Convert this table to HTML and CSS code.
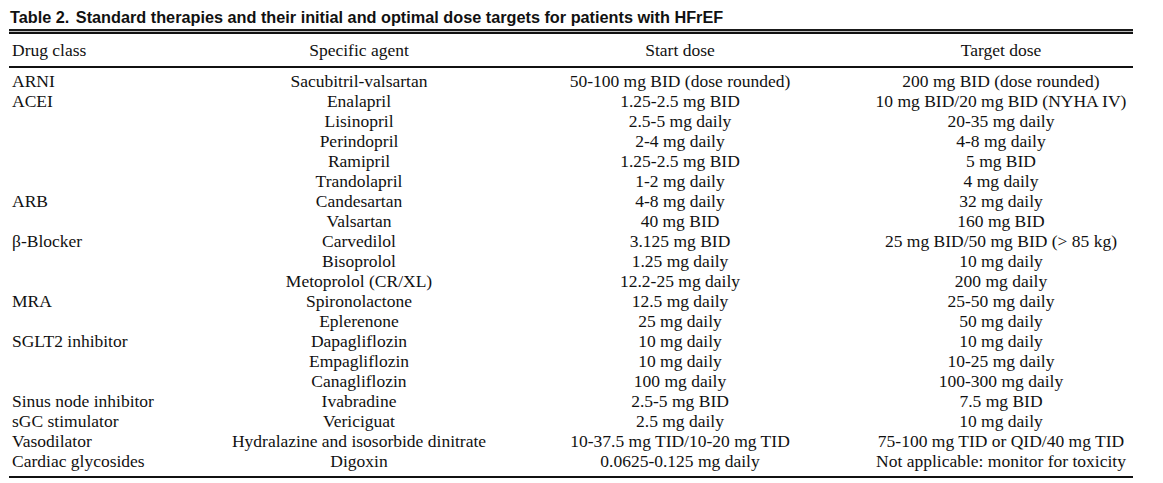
FILE: index.html
```html
<!DOCTYPE html>
<html>
<head>
<meta charset="utf-8">
<link rel="stylesheet" href="styles.css">
</head>
<body>
<div class="wrap">
  <div class="caption"><span class="label">Table 2.</span> Standard therapies and their initial and optimal dose targets for patients with HFrEF</div>
  <div class="double-rule"></div>
  <table class="dose-table">
    <colgroup>
      <col class="c1"><col class="c2"><col class="c3"><col class="c4">
    </colgroup>
    <thead>
      <tr><th class="left">Drug class</th><th>Specific agent</th><th>Start dose</th><th>Target dose</th></tr>
    </thead>
    <tbody>
      <tr class="first"><td class="left">ARNI</td><td>Sacubitril-valsartan</td><td>50-100 mg BID (dose rounded)</td><td>200 mg BID (dose rounded)</td></tr>
      <tr><td class="left">ACEI</td><td>Enalapril</td><td>1.25-2.5 mg BID</td><td>10 mg BID/20 mg BID (NYHA IV)</td></tr>
      <tr><td class="left"></td><td>Lisinopril</td><td>2.5-5 mg daily</td><td>20-35 mg daily</td></tr>
      <tr><td class="left"></td><td>Perindopril</td><td>2-4 mg daily</td><td>4-8 mg daily</td></tr>
      <tr><td class="left"></td><td>Ramipril</td><td>1.25-2.5 mg BID</td><td>5 mg BID</td></tr>
      <tr><td class="left"></td><td>Trandolapril</td><td>1-2 mg daily</td><td>4 mg daily</td></tr>
      <tr><td class="left">ARB</td><td>Candesartan</td><td>4-8 mg daily</td><td>32 mg daily</td></tr>
      <tr><td class="left"></td><td>Valsartan</td><td>40 mg BID</td><td>160 mg BID</td></tr>
      <tr><td class="left">&beta;-Blocker</td><td>Carvedilol</td><td>3.125 mg BID</td><td>25 mg BID/50 mg BID (&gt; 85 kg)</td></tr>
      <tr><td class="left"></td><td>Bisoprolol</td><td>1.25 mg daily</td><td>10 mg daily</td></tr>
      <tr><td class="left"></td><td>Metoprolol (CR/XL)</td><td>12.2-25 mg daily</td><td>200 mg daily</td></tr>
      <tr><td class="left">MRA</td><td>Spironolactone</td><td>12.5 mg daily</td><td>25-50 mg daily</td></tr>
      <tr><td class="left"></td><td>Eplerenone</td><td>25 mg daily</td><td>50 mg daily</td></tr>
      <tr><td class="left">SGLT2 inhibitor</td><td>Dapagliflozin</td><td>10 mg daily</td><td>10 mg daily</td></tr>
      <tr><td class="left"></td><td>Empagliflozin</td><td>10 mg daily</td><td>10-25 mg daily</td></tr>
      <tr><td class="left"></td><td>Canagliflozin</td><td>100 mg daily</td><td>100-300 mg daily</td></tr>
      <tr><td class="left">Sinus node inhibitor</td><td>Ivabradine</td><td>2.5-5 mg BID</td><td>7.5 mg BID</td></tr>
      <tr><td class="left">sGC stimulator</td><td>Vericiguat</td><td>2.5 mg daily</td><td>10 mg daily</td></tr>
      <tr><td class="left">Vasodilator</td><td>Hydralazine and isosorbide dinitrate</td><td>10-37.5 mg TID/10-20 mg TID</td><td>75-100 mg TID or QID/40 mg TID</td></tr>
      <tr class="last"><td class="left">Cardiac glycosides</td><td>Digoxin</td><td>0.0625-0.125 mg daily</td><td>Not applicable: monitor for toxicity</td></tr>
    </tbody>
  </table>
</div>
</body>
</html>
```

FILE: styles.css
```css
html, body {
  margin: 0;
  padding: 0;
  background: #ffffff;
}

.wrap {
  width: 1124px;
  padding: 0 0 0 9px;
  color: #111111;
}

.caption {
  font-family: "Liberation Sans", Arial, sans-serif;
  font-weight: bold;
  font-size: 16.25px;
  line-height: 18px;
  padding: 8px 0 0 1px;
  height: 21px;
  white-space: nowrap;
}

.caption .label {
  margin-right: 2px;
}

.double-rule {
  height: 1px;
  border-top: 2px solid #1a1a1a;
  border-bottom: 2px solid #111111;
  background: #bdbdbd;
}

.dose-table {
  width: 1124px;
  border-collapse: collapse;
  table-layout: fixed;
  font-family: "Liberation Serif", "Times New Roman", serif;
  font-size: 17.5px;
  color: #111111;
}

.c1 { width: 218px; }
.c2 { width: 264px; }
.c3 { width: 378px; }
.c4 { width: 264px; }

.dose-table th,
.dose-table td {
  padding: 0;
  text-align: center;
  white-space: nowrap;
  font-weight: normal;
  height: 20px;
  line-height: 20px;
}

.dose-table th.left,
.dose-table td.left {
  text-align: left;
  padding-left: 3px;
}

.dose-table thead th {
  height: 32px;
  line-height: 32px;
  border-bottom: 2px solid #111111;
}

.dose-table tr.first td {
  padding-top: 3px;
}

.dose-table tr.last td {
  padding-bottom: 5px;
  border-bottom: 2px solid #111111;
}
```
